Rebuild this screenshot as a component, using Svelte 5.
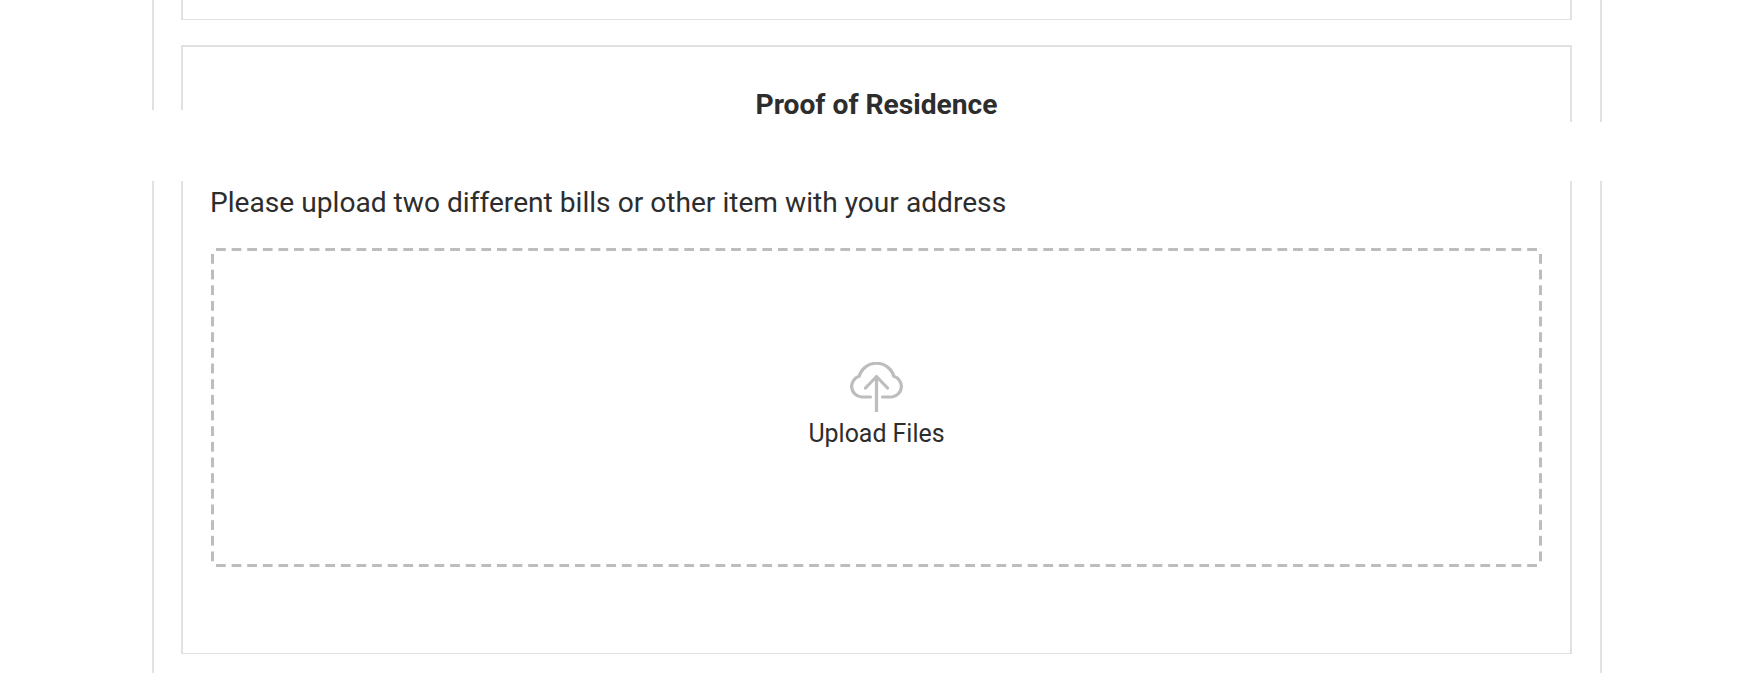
<script lang="ts">
	let title = 'Proof of Residence';
	let hint = 'Please upload two different bills or other item with your address';
</script>

<div class="page">
	<div class="panel">
		<section class="card prev"></section>

		<section class="card">
			<h2>{title}</h2>
			<p class="hint">{hint}</p>
			<button class="dropzone" type="button">
				<svg class="cloud" viewBox="0 0 54 50" width="54" height="50" fill="none" stroke="currentColor" stroke-width="3.200" stroke-linecap="round" stroke-linejoin="round">
					<path d="M20.500 35H11.200A10.600 10.600 0 0 1 9.200 14.300a18 18 0 0 1 34.600 0A10.600 10.600 0 0 1 41.800 35H32.500" />
					<path d="M26.500 49V14.500M15.500 26l11-11.500 11 11.500" />
				</svg>
				<span>Upload Files</span>
			</button>
		</section>
	</div>

	<!-- blank strip laid over the frame lines -->
	<div class="strip left"></div>
	<div class="strip right"></div>
</div>

<style>
	:global(body) {
		margin: 0;
		background: #fff;
		font-family: Roboto, "Liberation Sans", sans-serif;
	}

	.page {
		position: relative;
		height: 673px;
		overflow: hidden;
	}

	.panel {
		box-sizing: border-box;
		width: 1450px;
		height: 673px;
		margin-left: 152px;
		padding: 0 28px 0 27px;
		border-left: 2px solid #e1e1e1;
		border-right: 2px solid #e1e1e1;
	}

	.card {
		box-sizing: border-box;
		height: 609px;
		padding: 0 28px;
		border: 2px solid #e1e1e1;
		border-bottom-width: 1px;
		color: #2d2d2d;
	}

	.prev {
		height: 20px;
		margin-bottom: 25px;
		border-top: 0;
	}

	h2 {
		margin: 0;
		padding-top: 42px;
		font-size: 28.2px;
		line-height: 32px;
		font-weight: 700;
		text-align: center;
	}

	.hint {
		margin: 66px 0 0 -1px;
		font-size: 28.15px;
		line-height: 32px;
		font-weight: 400;
	}

	/* long dashes, the browser's own dashed border is too short */
	.dropzone {
		--dash: #bdbdbd;
		box-sizing: border-box;
		display: flex;
		flex-direction: column;
		align-items: center;
		justify-content: center;
		width: 100%;
		height: 319px;
		margin-top: 29px;
		padding: 0;
		border: 0;
		background-color: #fff;
		background-image:
			linear-gradient(90deg, var(--dash) 10px, transparent 10px),
			linear-gradient(90deg, var(--dash) 10px, transparent 10px),
			linear-gradient(var(--dash) 10px, transparent 10px),
			linear-gradient(var(--dash) 10px, transparent 10px);
		background-size: 15.62px 3px, 15.62px 3px, 3px 15.66px, 3px 15.66px;
		background-position: 5px 0, 5px 100%, 0 6px, 100% 6px;
		background-repeat: repeat-x, repeat-x, repeat-y, repeat-y;
		color: #2d2d2d;
		font-family: inherit;
		font-size: 24.9px;
		line-height: 40px;
	}

	.dropzone span {
		margin-top: 2px;
	}

	.cloud {
		display: block;
		color: #bdbdbd;
	}

	.strip {
		position: absolute;
		bottom: 492px;
		background: #fff;
		width: 500px;
	}

	.left {
		left: 140px;
		top: 110px;
	}

	.right {
		right: 140px;
		top: 122px;
	}
</style>
